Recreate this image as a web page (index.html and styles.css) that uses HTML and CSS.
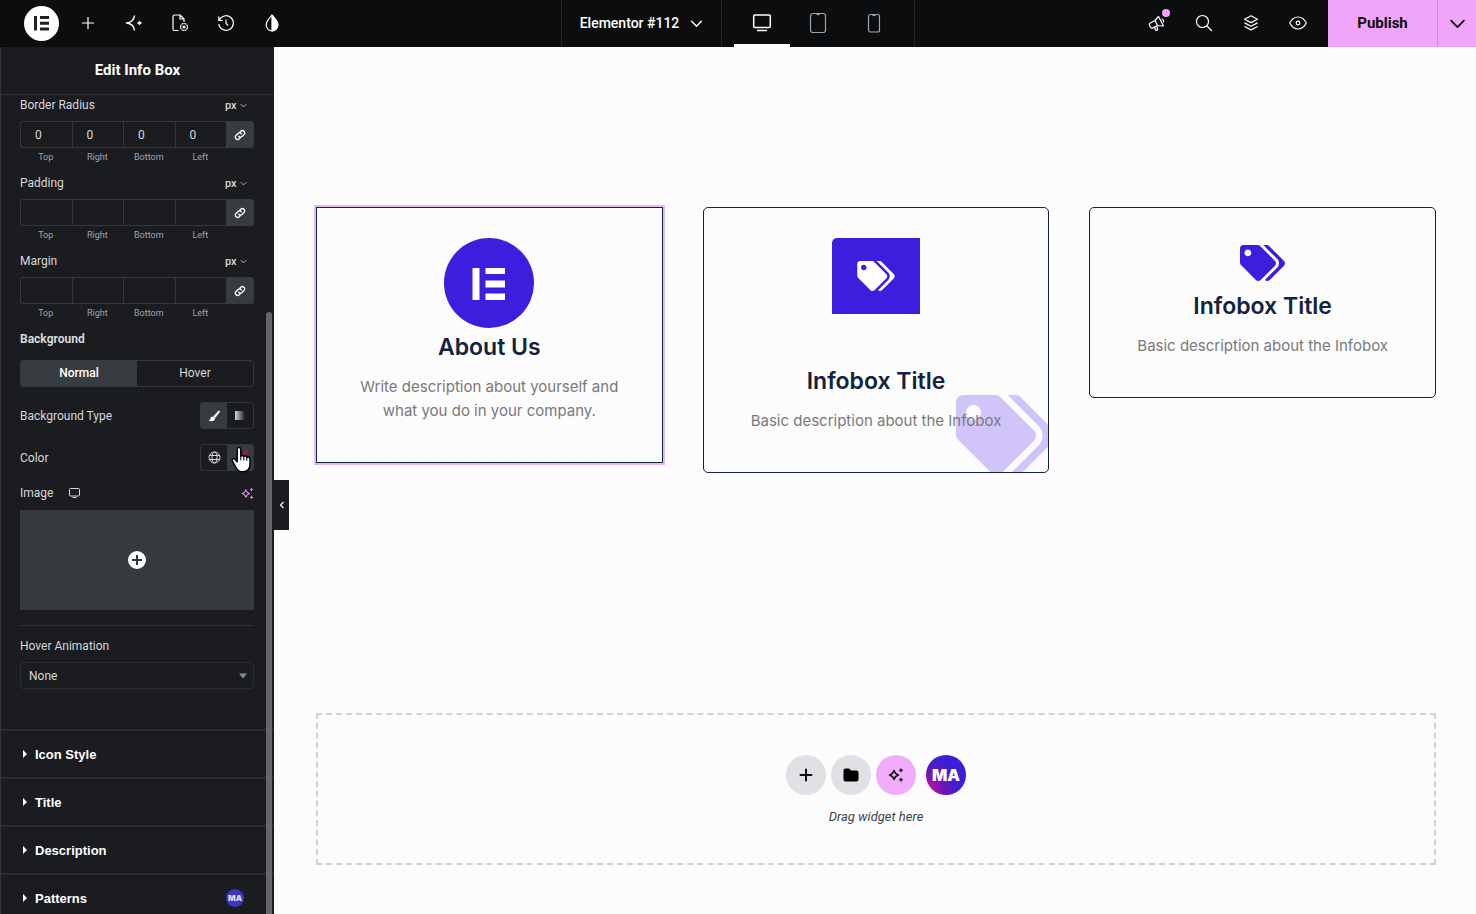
FILE: index.html
```
<!DOCTYPE html>
<html lang="en">
<head>
  <meta charset="UTF-8">
  <meta name="viewport" content="width=device-width, initial-scale=1.0">
  <title>Elementor #112</title>
  <link rel="stylesheet" href="styles.css">
</head>
<body>
  <svg class="symbols" aria-hidden="true">
    <symbol id="tags" viewBox="0 0 640 512">
      <path fill="currentColor" d="M497.941 225.941L286.059 14.059A48 48 0 0 0 252.118 0H48C21.49 0 0 21.49 0 48v204.118a48 48 0 0 0 14.059 33.941l211.882 211.882c18.744 18.745 49.136 18.746 67.882 0l204.118-204.118c18.745-18.745 18.745-49.137 0-67.882zM112 160c-26.51 0-48-21.49-48-48s21.49-48 48-48 48 21.49 48 48-21.49 48-48 48zm513.941 133.823L421.823 497.941c-18.745 18.745-49.137 18.745-67.882 0l-.36-.36L527.64 323.522c16.999-16.999 26.36-39.6 26.36-63.64s-9.362-46.641-26.36-63.64L331.397 0h48.721a48 48 0 0 1 33.941 14.059l211.882 211.882c18.745 18.745 18.745 49.137 0 67.882z"/>
    </symbol>
    <symbol id="chevron" viewBox="0 0 12 12">
      <path d="M1.5 4l4.5 4.500L10.500 4" fill="none" stroke="currentColor" stroke-width="1.300" stroke-linecap="round" stroke-linejoin="round"/>
    </symbol>
    <symbol id="chain" viewBox="0 0 24 24">
      <path d="M9.5 14.5a4.5 4.5 0 0 0 6.5.4l4-4a4.6 4.6 0 0 0-6.500-6.500l-2 2M14.500 9.500a4.500 4.500 0 0 0-6.500-.4l-4 4a4.600 4.600 0 0 0 6.500 6.500l2-2" fill="none" stroke="currentColor" stroke-width="2.600" stroke-linecap="round"/>
    </symbol>
    <symbol id="sparkles" viewBox="0 0 16 16">
      <path d="M6 3.500c.8 2.800 1.700 3.700 4.500 4.500C7.700 8.800 6.800 9.700 6 12.500 5.200 9.700 4.300 8.800 1.500 8 4.300 7.200 5.200 6.300 6 3.500z" fill="none" stroke="currentColor" stroke-width="1.400" stroke-linejoin="round"/>
      <path d="M13 .8l.8 1.700 1.700.8-1.700.8-.8 1.700-.8-1.700-1.700-.8 1.700-.8zM13 10.200l.8 1.700 1.700.8-1.700.8-.8 1.700-.8-1.700-1.700-.8 1.700-.8z" fill="currentColor"/>
    </symbol>
    <symbol id="plus" viewBox="0 0 14 14">
      <path d="M7 1.500v11M1.500 7h11" fill="none" stroke="currentColor" stroke-width="2" stroke-linecap="round"/>
    </symbol>
  </svg>

  <header class="topbar">
    <div class="topbar-left">
      <button class="logo" aria-label="Elementor menu">
        <svg width="35" height="35" viewBox="0 0 35 35"><circle cx="17.500" cy="17.500" r="17.500" fill="#fff"/><path d="M10 10h3v14.500h-3zM16 10h9v3h-9zM16 15.800h9v3h-9zM16 21.500h9v3h-9z" fill="#1f2124"/></svg>
      </button>
      <button class="tool" aria-label="Add element">
        <svg width="14" height="14" viewBox="0 0 14 14"><path d="M7 1v12M1 7h12"/></svg>
      </button>
      <button class="tool" aria-label="AI">
        <svg width="18" height="18" viewBox="0 0 18 18"><path d="M9.500 1.500C9 6 6.500 8.500 1.500 9c5 .5 7.500 3 8 7.500" stroke-width="1.500"/><path d="M14.500 7l.6 1.400 1.400.6-1.400.6-.6 1.400-.6-1.400-1.400-.6 1.400-.6z" fill="#fff" stroke-width="1"/></svg>
      </button>
      <button class="tool" aria-label="Page settings">
        <svg width="18" height="18" viewBox="0 0 18 18"><path d="M7.500 16.500h-4A1.500 1.500 0 0 1 2 15V2.500A1.500 1.500 0 0 1 3.500 1H9l4 4v3M9 1v4h4"/><circle cx="13" cy="13" r="3.500" stroke-dasharray="2.200 .5"/><circle cx="13" cy="13" r="1"/></svg>
      </button>
      <button class="tool" aria-label="History">
        <svg width="18" height="18" viewBox="0 0 18 18"><path d="M2.200 6.500A7.300 7.300 0 1 1 1.800 10M1.800 2.500v4h4M9 5.500V9.200l2 2.300"/></svg>
      </button>
      <button class="tool" aria-label="Site colors">
        <svg width="18" height="18" viewBox="0 0 18 18"><path d="M9 1.200C11.500 4 14.800 7.300 14.800 11A5.800 5.800 0 0 1 3.200 11C3.200 7.300 6.500 4 9 1.200z"/><path d="M9 1.200C11.500 4 14.800 7.300 14.800 11A5.800 5.800 0 0 1 9 16.800z" fill="#fff"/></svg>
      </button>
    </div>
    <div class="topbar-center">
      <button class="doc-title">Elementor #112 <svg width="13" height="13"><use href="#chevron"/></svg></button>
      <div class="devices">
        <button class="device active" aria-label="Desktop">
          <svg width="20" height="20" viewBox="0 0 20 20"><rect x="1.700" y="2" width="16.600" height="12.500" rx="1"/><path d="M5 17.500h10"/></svg>
        </button>
        <button class="device" aria-label="Tablet">
          <svg width="18" height="22" viewBox="0 0 18 22"><rect x="1.500" y="1.500" width="15" height="19" rx="2.500"/><path d="M7.500 2.500h3"/></svg>
        </button>
        <button class="device" aria-label="Mobile">
          <svg width="18" height="22" viewBox="0 0 18 22"><rect x="3.500" y="2.500" width="11" height="17.500" rx="2"/><path d="M7.500 3.500h3"/></svg>
        </button>
      </div>
    </div>
    <div class="topbar-right">
      <button class="tool news" aria-label="What's new">
        <svg width="18" height="18" viewBox="0 0 18 18"><path d="M10.500 2.500l5 9.500-6-.500-4.500 2.400a1.800 1.800 0 0 1-2.500-.7l-.9-1.700a1.800 1.800 0 0 1 .7-2.500L7 6.500zM7 6.500l2.500 5M6.500 13.200l1.300 3.300 2-.8-1.300-4M13.500 5a2.200 2.200 0 0 1 1.700 3.500"/></svg>
        <span class="dot"></span>
      </button>
      <button class="tool" aria-label="Finder">
        <svg width="18" height="18" viewBox="0 0 18 18"><circle cx="7.500" cy="7.500" r="6"/><path d="M12 12l5 5"/></svg>
      </button>
      <button class="tool" aria-label="Structure">
        <svg width="18" height="18" viewBox="0 0 18 18"><path d="M9 1.800l6.500 3.400L9 8.600 2.500 5.200zM2.500 8.900L9 12.300l6.500-3.400M2.500 12.500L9 15.900l6.500-3.400"/></svg>
      </button>
      <button class="tool" aria-label="Preview">
        <svg width="18" height="18" viewBox="0 0 18 18"><path d="M.7 9C2.700 5.200 5.600 3 9 3s6.300 2.200 8.300 6c-2 3.800-4.900 6-8.300 6S2.700 12.800.7 9z"/><circle cx="9" cy="9" r="1.800"/></svg>
      </button>
      <button class="publish">Publish</button>
      <button class="publish-more" aria-label="Save options"><svg width="17" height="17"><use href="#chevron"/></svg></button>
    </div>
  </header>

  <div class="editor">
    <aside class="panel">
      <h1 class="panel-title">Edit Info Box</h1>
      <div class="panel-body">
        <div class="controls">
          <fieldset class="dimensions">
            <div class="control-head">
              <span>Border Radius</span>
              <label class="unit"><select aria-label="Border radius unit"><option>px</option></select><svg width="7" height="7"><use href="#chevron"/></svg></label>
            </div>
            <div class="sides">
              <div class="side"><input id="radius-top" type="text" value="0"><label for="radius-top">Top</label></div>
              <div class="side"><input id="radius-right" type="text" value="0"><label for="radius-right">Right</label></div>
              <div class="side"><input id="radius-bottom" type="text" value="0"><label for="radius-bottom">Bottom</label></div>
              <div class="side"><input id="radius-left" type="text" value="0"><label for="radius-left">Left</label></div>
              <button class="link-values" aria-label="Link values"><svg width="12" height="12"><use href="#chain"/></svg></button>
            </div>
          </fieldset>
          <fieldset class="dimensions">
            <div class="control-head">
              <span>Padding</span>
              <label class="unit"><select aria-label="Padding unit"><option>px</option></select><svg width="7" height="7"><use href="#chevron"/></svg></label>
            </div>
            <div class="sides">
              <div class="side"><input id="padding-top" type="text"><label for="padding-top">Top</label></div>
              <div class="side"><input id="padding-right" type="text"><label for="padding-right">Right</label></div>
              <div class="side"><input id="padding-bottom" type="text"><label for="padding-bottom">Bottom</label></div>
              <div class="side"><input id="padding-left" type="text"><label for="padding-left">Left</label></div>
              <button class="link-values" aria-label="Link values"><svg width="12" height="12"><use href="#chain"/></svg></button>
            </div>
          </fieldset>
          <fieldset class="dimensions">
            <div class="control-head">
              <span>Margin</span>
              <label class="unit"><select aria-label="Margin unit"><option>px</option></select><svg width="7" height="7"><use href="#chevron"/></svg></label>
            </div>
            <div class="sides">
              <div class="side"><input id="margin-top" type="text"><label for="margin-top">Top</label></div>
              <div class="side"><input id="margin-right" type="text"><label for="margin-right">Right</label></div>
              <div class="side"><input id="margin-bottom" type="text"><label for="margin-bottom">Bottom</label></div>
              <div class="side"><input id="margin-left" type="text"><label for="margin-left">Left</label></div>
              <button class="link-values" aria-label="Link values"><svg width="12" height="12"><use href="#chain"/></svg></button>
            </div>
          </fieldset>

          <h2 class="group-title">Background</h2>
          <div class="tabs">
            <button class="tab active">Normal</button>
            <button class="tab">Hover</button>
          </div>
          <div class="control-row">
            <span>Background Type</span>
            <div class="choices">
              <button class="active" aria-label="Classic"><svg width="12" height="12" viewBox="0 0 12 12"><path d="M11.500.6c.6.500.4 1.100 0 1.700L7.300 8 5.300 6.300 10.300 1c.4-.5.800-.7 1.200-.4zM4.900 6.500L7.100 8.300c-.2 2.800-3.300 3.900-6.800 2.300 1.200-.2 1.700-.9 2-1.900.3-1.300 1.300-2.200 2.600-2.200z" fill="#fff"/></svg></button>
              <button aria-label="Gradient"><span class="gradient"></span></button>
            </div>
          </div>
          <div class="control-row">
            <span>Color</span>
            <div class="choices">
              <button aria-label="Global colors"><svg width="13" height="13" viewBox="0 0 13 13" fill="none" stroke="#d5d8dc"><circle cx="6.500" cy="6.500" r="5.500"/><ellipse cx="6.500" cy="6.500" rx="2.500" ry="5.500"/><path d="M1.500 4.500h10M1.500 8.500h10"/></svg></button>
              <button class="swatch" aria-label="Pick color">
                <svg width="25" height="25" viewBox="0 0 25 25"><path d="M6 19L20 5" stroke="#9c1f45" stroke-width="2"/></svg>
                <svg class="pointer" width="22" height="28" viewBox="0 0 22 28"><path d="M6.200 3.400c0-2.400 3.600-2.400 3.600 0v7c.4-1.500 3-1.300 3 .4.500-1.200 3-1 3 .7.600-1 3.200-.8 3.200 1.300v5.500c0 4.500-2.300 7.500-7.300 7.500-4 0-5.400-1.800-6.700-4.300L1.500 15.200c-1-2 1.400-3.400 2.800-1.800l1.900 2.300z" fill="#fff" stroke="#000" stroke-width="1.500" stroke-linejoin="round"/><path d="M9.800 10v4M12.800 11v3.200M15.800 12v2.500" stroke="#000" stroke-linecap="round"/></svg>
              </button>
            </div>
          </div>
          <div class="control-head image-head">
            <span>Image</span>
            <svg width="13" height="13" viewBox="0 0 13 13" fill="none" stroke="#d5d8dc"><rect x="1.500" y="1.500" width="10" height="7.500" rx="1"/><path d="M4.500 10.500h4"/></svg>
            <button class="ai" aria-label="Edit with AI"><svg width="13" height="13"><use href="#sparkles"/></svg></button>
          </div>
          <button class="media" aria-label="Choose image">
            <svg width="18" height="18" viewBox="0 0 18 18"><circle cx="9" cy="9" r="9" fill="#fff"/><path d="M9 4v10M4 9h10" stroke="#30353a" stroke-width="2"/></svg>
          </button>
          <div class="animation">
            <label for="hover-animation">Hover Animation</label>
            <div class="select-wrap">
              <select id="hover-animation"><option>None</option></select>
              <svg width="8" height="6" viewBox="0 0 8 6"><path d="M0 .5h8L4 5.500z" fill="#818a91"/></svg>
            </div>
          </div>
        </div>

        <button class="section"><i class="caret"></i>Icon Style</button>
        <button class="section"><i class="caret"></i>Title</button>
        <button class="section"><i class="caret"></i>Description</button>
        <button class="section"><i class="caret"></i>Patterns <span class="badge">MA</span></button>
      </div>
      <div class="scrollbar"></div>
      <button class="collapse" aria-label="Hide panel"><svg width="8" height="8" viewBox="0 0 8 8"><path d="M5.500 1l-3 3 3 3" fill="none" stroke="#fff" stroke-width="1.200"/></svg></button>
    </aside>

    <main class="canvas">
      <div class="cards">
        <article class="card selected">
          <div class="card-icon circle">
            <svg width="34" height="34" viewBox="0 0 34 34"><path d="M.5 2h7v32h-7zM13.500 2H33v6H13.500zM13.500 14.500H33v7H13.500zM13.500 27.500H33V34H13.500z" fill="#fff"/></svg>
          </div>
          <h3>About Us</h3>
          <p>Write description about yourself and what you do in your company.</p>
        </article>
        <article class="card">
          <div class="card-icon square"><svg width="38" height="30"><use href="#tags"/></svg></div>
          <h3>Infobox Title</h3>
          <svg class="watermark" width="100" height="80"><use href="#tags"/></svg>
          <p>Basic description about the Infobox</p>
        </article>
        <article class="card">
          <div class="card-icon plain"><svg width="45" height="36"><use href="#tags"/></svg></div>
          <h3>Infobox Title</h3>
          <p>Basic description about the Infobox</p>
        </article>
      </div>

      <section class="dropzone">
        <div class="drop-actions">
          <button aria-label="Add container"><svg width="14" height="14"><use href="#plus"/></svg></button>
          <button aria-label="Add template"><svg width="16" height="14" viewBox="0 0 16 14"><path d="M2.500.5h3.700L8 2.500h5.500a2 2 0 0 1 2 2v7a2 2 0 0 1-2 2h-11a2 2 0 0 1-2-2v-9a2 2 0 0 1 2-2z"/></svg></button>
          <button class="pink" aria-label="Build with AI"><svg width="16" height="16"><use href="#sparkles"/></svg></button>
          <button class="addons" aria-label="Master Addons">MA</button>
        </div>
        <p>Drag widget here</p>
      </section>
    </main>
  </div>
</body>
</html>
```

FILE: styles.css
```
* {
  box-sizing: border-box;
}
body {
  margin: 0;
  height: 100vh;
  display: flex;
  flex-direction: column;
  overflow: hidden;
  background: #fcfcfd;
  font-family: Roboto, Arial, sans-serif;
  font-size: 12px;
}
button, input, select {
  font: inherit;
  color: inherit;
  margin: 0;
  padding: 0;
  border: none;
  background: none;
}
button {
  display: flex;
  align-items: center;
  justify-content: center;
  cursor: pointer;
}
select {
  appearance: none;
}
.symbols {
  display: none;
}

/* Top bar */
.topbar {
  display: grid;
  grid-template-columns: 1fr auto 1fr;
  flex: none;
  height: 47px;
  background: #0c0d0e;
  color: #fff;
}
.topbar-left, .topbar-center, .topbar-right, .devices {
  display: flex;
}
.topbar-left {
  padding-left: 18px;
}
.topbar-right {
  justify-content: flex-end;
}
.logo {
  width: 47px;
}
.tool {
  width: 46px;
  padding-bottom: 1px;
}
.topbar-right .tool {
  width: 47px;
}
.tool svg, .device svg {
  fill: none;
  stroke: #fff;
  stroke-width: 1.2;
  stroke-linejoin: round;
}
.topbar-center {
  border-left: 1px solid #232629;
  border-right: 1px solid #232629;
}
.doc-title {
  gap: 11px;
  padding: 0 18px 1px;
  font-size: 14px;
  font-weight: 500;
}
.devices {
  padding: 0 12px;
  border-left: 1px solid #232629;
}
.device {
  width: 56px;
  padding-bottom: 1px;
  border-bottom: 3px solid transparent;
  border-top: 3px solid transparent;
}
.device svg {
  stroke: #9da5ae;
}
.device.active {
  border-bottom-color: #fff;
}
.device.active svg {
  stroke: #fff;
  stroke-width: 1.5;
}
.news {
  position: relative;
}
.dot {
  position: absolute;
  top: 9px;
  right: 10px;
  width: 8px;
  height: 8px;
  border-radius: 50%;
  background: #f0a5fb;
}
.publish, .publish-more {
  padding-bottom: 1px;
  background: #f0a5fb;
  color: #0c0d0e;
}
.publish {
  margin-left: 7px;
  width: 109px;
  font-size: 15px;
  font-weight: 700;
}
.publish-more {
  width: 39px;
  border-left: 1px solid #cb8bd6;
}

/* Panel */
.editor {
  display: flex;
  flex: 1;
  min-height: 0;
}
.panel {
  position: relative;
  display: flex;
  flex-direction: column;
  flex: none;
  width: 274px;
  border-left: 1px solid #33363a;
  background: #1a1c1f;
  color: #d5d8dc;
}
.panel-title {
  flex: none;
  margin: 0;
  height: 48px;
  border-bottom: 1px solid #2e3135;
  color: #fff;
  font-size: 15px;
  font-weight: 700;
  line-height: 46px;
  text-align: center;
}
.panel-body {
  flex: 1;
  min-height: 0;
  overflow: hidden;
}
.controls {
  padding: 0 20px 40px 19px;
}
fieldset {
  margin: 0 0 7px;
  padding: 0;
  border: none;
}
.control-head {
  display: flex;
  align-items: center;
  height: 20px;
}
.unit {
  display: flex;
  align-items: center;
  gap: 3px;
  margin: 0 7px 0 auto;
  font-size: 11px;
  font-weight: 500;
}
.sides {
  display: flex;
  margin-top: 6px;
}
.side {
  flex: 1;
}
.side input {
  display: block;
  width: 100%;
  height: 27px;
  padding-right: 16px;
  border: 1px solid #34383c;
  border-right: none;
  text-align: center;
}
.side:first-child input {
  border-radius: 3px 0 0 3px;
}
.side label {
  display: block;
  color: #9da5ae;
  font-size: 9px;
  line-height: 18px;
  text-align: center;
}
.link-values {
  width: 28px;
  height: 27px;
  border-radius: 0 3px 3px 0;
  background: #373c40;
  color: #fff;
}
.group-title {
  margin: 0;
  font-size: 12px;
  font-weight: 700;
  line-height: 20px;
}
.tabs {
  display: flex;
  height: 27px;
  margin-top: 11px;
  border: 1px solid #34383c;
  border-radius: 3px;
}
.tab {
  flex: 1;
  padding-bottom: 1px;
}
.tab.active, .choices .active {
  background: #373c40;
  color: #fff;
}
.tab.active {
  font-weight: 500;
}
.control-row {
  display: flex;
  align-items: center;
  justify-content: space-between;
  margin-top: 15px;
}
.choices {
  display: flex;
  width: 54px;
  height: 27px;
  border: 1px solid #34383c;
  border-radius: 3px;
}
.choices button {
  flex: 1;
}
.gradient {
  width: 10px;
  height: 9px;
  background: linear-gradient(90deg, #d5d8dc, #1a1c1f);
}
.swatch {
  position: relative;
  background: #373c40;
}
.swatch svg {
  flex: none;
}
.pointer {
  position: absolute;
  top: 1px;
  left: 4px;
}
.image-head {
  gap: 15px;
  margin-top: 12px;
}
.ai {
  margin-left: auto;
  color: #eb8efb;
}
.media {
  width: 100%;
  height: 100px;
  margin-top: 7px;
  background: #373b40;
}
.animation {
  margin-top: 15px;
  padding-top: 10px;
  border-top: 1px solid #2e3135;
}
.animation label {
  display: block;
  line-height: 20px;
}
.select-wrap {
  display: flex;
  align-items: center;
  height: 27px;
  margin-top: 6px;
  padding-right: 6px;
  border: 1px solid #2a2d31;
  border-radius: 3px;
}
.select-wrap select {
  flex: 1;
  height: 100%;
  padding-left: 8px;
}
.section {
  width: 100%;
  height: 48px;
  justify-content: flex-start;
  padding: 0 30px 0 22px;
  border-top: 2px solid #2a2c2f;
  color: #fff;
  font-family: "Liberation Sans", Arial, sans-serif;
  font-size: 13px;
  font-weight: 700;
}
.caret {
  margin-right: 8px;
  border-left: 4px solid #fff;
  border-top: 4px solid transparent;
  border-bottom: 4px solid transparent;
}
.badge {
  width: 18px;
  margin-left: auto;
  border-radius: 50%;
  background: #3d36c4;
  color: #dcdcf0;
  font: 900 8px/18px Inter, sans-serif;
  text-align: center;
}
.scrollbar {
  position: absolute;
  top: 265px;
  right: 2px;
  bottom: 0;
  width: 6px;
  border-radius: 3px 3px 0 0;
  background: #646668;
}
.collapse {
  position: absolute;
  top: 433px;
  left: 100%;
  width: 15px;
  height: 50px;
  background: #1a1c1f;
}

/* Canvas */
.canvas {
  flex: 1;
  padding: 160px 40px 0 42px;
  font-family: Inter, sans-serif;
}
.cards {
  display: grid;
  grid-template-columns: repeat(3, 1fr);
  align-items: start;
  gap: 40px;
}
.card {
  position: relative;
  padding: 30px 30px 39px;
  overflow: hidden;
  border: 1px solid #12233b;
  border-radius: 5px;
  text-align: center;
}
.card.selected {
  border-radius: 0;
  outline: 2px solid #e6b8f2;
}
.card-icon {
  display: flex;
  align-items: center;
  justify-content: center;
  margin: 0 auto 5px;
  background: #3f1ddf;
  color: #fff;
}
.circle {
  width: 90px;
  height: 90px;
  border-radius: 50%;
}
.square {
  width: 88px;
  height: 76px;
  margin-bottom: 53px;
  border-radius: 5px 0 0 0;
}
.plain {
  height: 49px;
  background: none;
  color: #3f1ddf;
}
.card h3 {
  margin: 0 0 14px;
  color: #12233b;
  font-size: 23px;
  font-weight: 600;
  line-height: 28px;
}
.card p {
  position: relative;
  margin: 0;
  color: #797979;
  font-size: 15px;
  line-height: 24px;
}
.watermark {
  position: absolute;
  right: -8px;
  bottom: -3px;
  color: #d0c4f8;
}
.dropzone {
  margin-top: 240px;
  padding: 40px 0 36px;
  border: 2px dashed #d0d2d5;
  font-family: Roboto, Arial, sans-serif;
  text-align: center;
}
.drop-actions {
  display: flex;
  justify-content: center;
  gap: 5px;
}
.drop-actions button {
  width: 40px;
  height: 40px;
  border-radius: 50%;
  background: #e0e1e4;
  color: #0c0d0e;
}
.drop-actions .pink {
  background: #f0abfc;
}
.drop-actions .addons {
  margin-left: 5px;
  background: radial-gradient(circle at 0 90%, #d80f9c, #6a16b8 35%, #3a1fd8 65%);
  color: #fff;
  font: 900 16px Inter, sans-serif;
}
.dropzone p {
  margin: 12px 0 0;
  color: #3f444b;
  font-size: 13px;
  font-style: italic;
  line-height: 20px;
}
```
